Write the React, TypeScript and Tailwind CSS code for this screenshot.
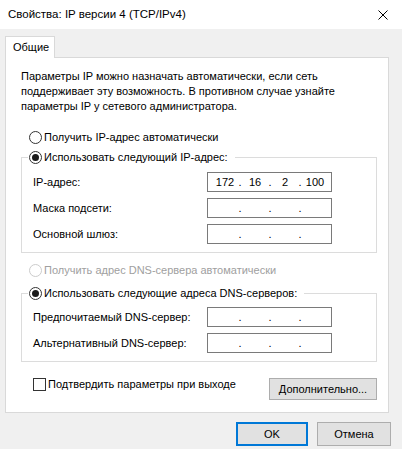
import type { ReactNode } from 'react'

const font = "font-['Segoe_UI','Liberation_Sans',Arial,sans-serif]"

function Radio({ checked, disabled }: { checked?: boolean; disabled?: boolean }) {
  return (
    <span
      className={
        disabled
          ? 'w-[13px] h-[13px] shrink-0 rounded-full border border-[#cccccc] bg-white flex items-center justify-center'
          : 'w-[13px] h-[13px] shrink-0 rounded-full border border-[#333333] bg-white flex items-center justify-center'
      }
    >
      {checked && <span className="w-[7px] h-[7px] rounded-full bg-[#1a1a1a]" />}
    </span>
  )
}

function IpBox({ parts = ['', '', '', ''] }: { parts?: string[] }) {
  return (
    <div className="w-[125px] h-[20px] border border-[#7a7a7a] bg-white flex items-center pl-[3px]">
      {parts.map((p, i) => (
        <div key={i} className="flex items-center">
          <span className="w-[28px] text-center">{p}</span>
          {i < 3 && <span className="w-[2px] flex justify-center">.</span>}
        </div>
      ))}
    </div>
  )
}

function Row({ label, parts }: { label: string; parts?: string[] }) {
  return (
    <div className="flex items-center h-[20px]">
      <span className="w-[174px]">{label}</span>
      <IpBox parts={parts} />
    </div>
  )
}

function Group({ legend, children }: { legend: ReactNode; children: ReactNode }) {
  return (
    <fieldset className="ml-[15px] mr-[11px] border border-[#dcdcdc] pb-[8px]">
      <legend className="ml-[6px] pl-[1px] pr-[7px]">{legend}</legend>
      <div className="pl-[11px]">{children}</div>
    </fieldset>
  )
}

export default function App() {
  return (
    <div className={`${font} w-[402px] h-[449px] bg-[#f0f0f0] text-[11px] leading-[15px] text-black flex flex-col`}>
      {/* title bar */}
      <div className="h-[29px] bg-white flex items-center justify-between pl-[8px] pr-[14px] shrink-0 text-[11.5px]">
        <span>Свойства: IP версии 4 (TCP/IPv4)</span>
        <svg width="10" height="10" viewBox="0 0 10 10" className="mt-[1px]">
          <path d="M0.5 0.5 L9.5 9.5 M9.5 0.5 L0.5 9.5" stroke="#000" strokeWidth="1" fill="none" />
        </svg>
      </div>

      <div className="pt-[7px] pl-[5px] pr-[13px]">
        {/* tab strip */}
        <div className="relative z-10 -mb-[1px] w-[50px] h-[22px] bg-white border border-b-0 border-[#d9d9d9] flex items-center pl-[7px]">
          Общие
        </div>

        {/* tab page */}
        <div className="bg-white border border-[#d9d9d9] pb-[12px]">
          <p className="pt-[11px] pl-[15px]">
            Параметры IP можно назначать автоматически, если сеть
            <br />
            поддерживает эту возможность. В противном случае узнайте
            <br />
            параметры IP у сетевого администратора.
          </p>

          <div className="mt-[16px] pl-[23px] flex items-center gap-[2px] h-[15px]">
            <Radio />
            <span>Получить IP-адрес автоматически</span>
          </div>

          <div className="mt-[5px]">
            <Group
              legend={
                <span className="flex items-center gap-[2px]">
                  <Radio checked />
                  <span>Использовать следующий IP-адрес:</span>
                </span>
              }
            >
              <div className="mt-[7px] flex flex-col gap-[6px]">
                <Row label="IP-адрес:" parts={['172', '16', '2', '100']} />
                <Row label="Маска подсети:" />
                <Row label="Основной шлюз:" />
              </div>
            </Group>
          </div>

          <div className="mt-[10px] pl-[23px] flex items-center gap-[2px] h-[15px] text-[#a0a0a0]">
            <Radio disabled />
            <span>Получить адрес DNS-сервера автоматически</span>
          </div>

          <div className="mt-[8px]">
            <Group
              legend={
                <span className="flex items-center gap-[2px]">
                  <Radio checked />
                  <span>Использовать следующие адреса DNS-серверов:</span>
                </span>
              }
            >
              <div className="mt-[6px] flex flex-col gap-[6px]">
                <Row label="Предпочитаемый DNS-сервер:" />
                <Row label="Альтернативный DNS-сервер:" />
              </div>
            </Group>
          </div>

          <div className="mt-[15px] pl-[27px] pr-[11px] flex items-start justify-between">
            <div className="flex items-center gap-[2px] h-[15px]">
              <span className="w-[13px] h-[13px] border border-[#333333] bg-white" />
              <span>Подтвердить параметры при выходе</span>
            </div>
            <button className="mt-[1px] w-[108px] h-[22px] bg-[#e1e1e1] border border-[#adadad] flex items-center justify-center">
              Дополнительно...
            </button>
          </div>
        </div>
      </div>

      {/* dialog buttons */}
      <div className="mt-[9px] pr-[11px] flex justify-end gap-[9px]">
        <button className="w-[72px] h-[24px] bg-[#e1e1e1] border-2 border-[#0078d7] flex items-center justify-center">
          OK
        </button>
        <button className="w-[74px] h-[24px] bg-[#e1e1e1] border border-[#adadad] flex items-center justify-center">
          Отмена
        </button>
      </div>
    </div>
  )
}
